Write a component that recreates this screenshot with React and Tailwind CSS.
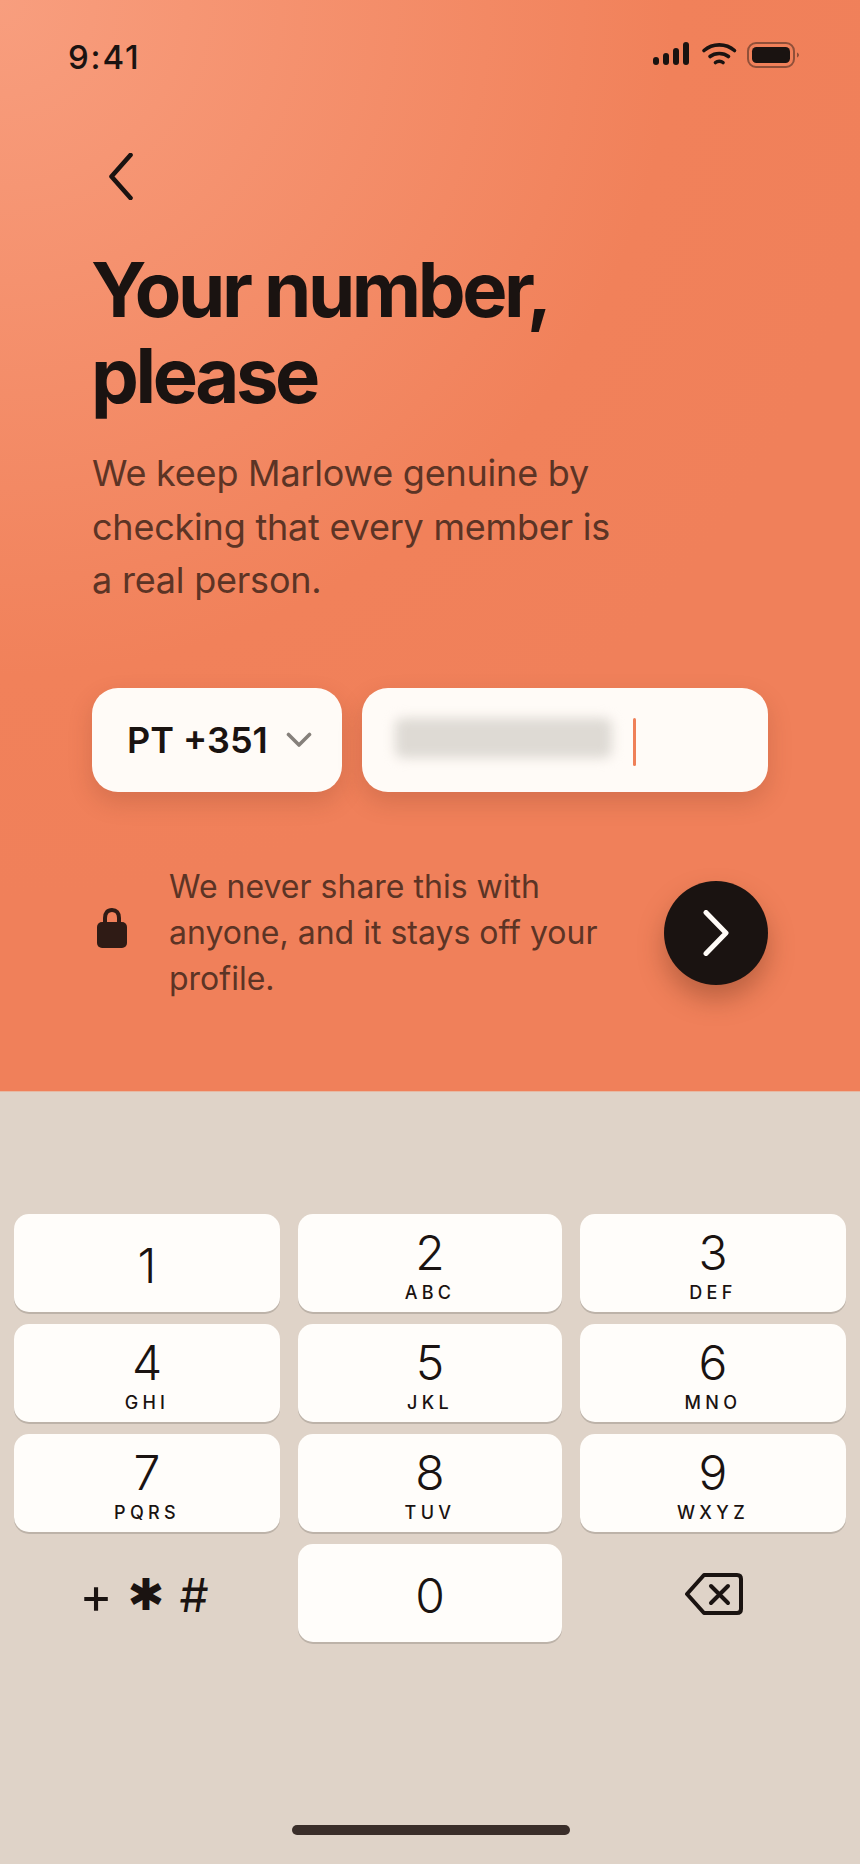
import React from 'react';

const keys = [
  ['1', ''], ['2', 'ABC'], ['3', 'DEF'],
  ['4', 'GHI'], ['5', 'JKL'], ['6', 'MNO'],
  ['7', 'PQRS'], ['8', 'TUV'], ['9', 'WXYZ'],
];

const Key = ({ digit, letters }) => (
  <button className="h-[98px] rounded-[15px] bg-[#fffdfa] shadow-[0_2px_0_#bdb3a9] flex flex-col items-center justify-center pt-[5px] text-[#1a1311]">
    <span className="text-[48px] leading-[50px] font-[350]">{digit}</span>
    {letters && <span className="text-[18px] leading-[22px] mt-[4px] font-medium tracking-[0.24em]">{letters}</span>}
  </button>
);

const StatusIcons = () => (
  <svg width="146" height="26" viewBox="0 0 146 26" fill="none">
    <rect x="0" y="15" width="6" height="8" rx="3" fill="#1a1311" />
    <rect x="10" y="11" width="6" height="12" rx="3" fill="#1a1311" />
    <rect x="20" y="6" width="6" height="17" rx="3" fill="#1a1311" />
    <rect x="30" y="0" width="6" height="23" rx="3" fill="#1a1311" />
    <path d="M51 8.5C59.5 1 73 1 81.5 8.5" stroke="#1a1311" strokeWidth="3.6" strokeLinecap="round" />
    <path d="M57 14.5C62 10.5 70.5 10.5 75.5 14.5" stroke="#1a1311" strokeWidth="3.6" strokeLinecap="round" />
    <path d="M62.5 20.5C64.5 18.8 68 18.8 70 20.5" stroke="#1a1311" strokeWidth="3.6" strokeLinecap="round" />
    <rect x="95" y="1" width="46" height="24" rx="8" stroke="#1a1311" strokeOpacity="0.45" strokeWidth="2" />
    <rect x="99" y="5" width="38" height="16" rx="4.5" fill="#1a1311" />
    <path d="M144 10.5C145.4 11.2 146 12 146 13C146 14 145.4 14.8 144 15.5Z" fill="#1a1311" fillOpacity="0.45" />
  </svg>
);

export default function App() {
  return (
    <div className="w-[860px] h-[1864px] flex flex-col overflow-hidden font-['Inter',sans-serif]">
      <section className="h-[1092px] shrink-0 bg-[radial-gradient(ellipse_900px_900px_at_0%_0%,#f89e7e_0%,#f1815a_75%,#f0805a_100%)] border-b border-[#e7b9a3]">
        <div className="flex items-start justify-between pl-[68px] pr-[61px] pt-[39px]">
          <span className="text-[33px] leading-[36px] font-medium tracking-[0.055em] text-[#1a1311]">9:41</span>
          <div className="pt-[3px]"><StatusIcons /></div>
        </div>

        <div className="pl-[109px] mt-[78px]">
          <svg width="24" height="47" viewBox="0 0 24 47" fill="none">
            <path d="M21.5 2L2.5 23.5L21.5 45" stroke="#1a1311" strokeWidth="4.6" strokeLinecap="round" strokeLinejoin="round" />
          </svg>
        </div>

        <div className="px-[92px]">
          <h1 className="mt-[46px] -ml-[1px] text-[76px] leading-[86px] font-bold tracking-[-0.045em] text-[#1a1311]">
            Your number,<br />please
          </h1>
          <p className="mt-[29px] text-[36px] leading-[53.5px] tracking-[-0.006em] text-[#5c3425]">
            We keep Marlowe genuine by<br />checking that every member is<br />a real person.
          </p>

          <div className="mt-[80px] flex gap-[20px]">
            <div className="w-[250px] h-[104px] rounded-[26px] bg-[#fffbf7] shadow-[0_10px_24px_rgba(90,40,20,0.18)] flex items-center pl-[35px] gap-[18px]">
              <span className="text-[36px] font-semibold text-[#1a1311]">PT +351</span>
              <svg width="26" height="16" viewBox="0 0 26 16" fill="none">
                <path d="M2.5 2.5L13 13L23.5 2.5" stroke="#86807b" strokeWidth="3.6" strokeLinecap="round" strokeLinejoin="round" />
              </svg>
            </div>
            <div className="flex-1 h-[104px] rounded-[26px] bg-[#fffbf7] shadow-[0_10px_24px_rgba(90,40,20,0.18)] flex items-center pl-[33px]">
              <div className="w-[217px] h-[40px] mb-[4px] rounded-[8px] bg-[#dedad4] blur-[6px]" />
              <div className="w-[3px] h-[48px] ml-[21px] mt-[4px] rounded-full bg-[#ef8058]" />
            </div>
          </div>

          <div className="mt-[72px] flex items-center">
            <svg className="w-[30px] h-[41px] ml-[5px] mb-[10px] shrink-0" viewBox="0 0 30 41" fill="none">
              <path d="M8 17V11C8 6 10.5 3 15 3C19.5 3 22 6 22 11V17" stroke="#2f1b15" strokeWidth="4" />
              <rect x="0" y="15" width="30" height="26" rx="5" fill="#2f1b15" />
            </svg>
            <p className="ml-[42px] w-[450px] text-[32px] leading-[46px] text-[#5c3425]">
              We never share this with anyone, and it stays off your profile.
            </p>
            <button className="ml-auto mt-[1px] w-[104px] h-[104px] rounded-full bg-[#1a1311] shadow-[0_14px_26px_rgba(90,40,20,0.35)] flex items-center justify-center">
              <svg width="26" height="46" viewBox="0 0 26 46" fill="none">
                <path d="M3 2.5L23 23L3 43.5" stroke="#fffbf7" strokeWidth="5" strokeLinecap="round" strokeLinejoin="round" />
              </svg>
            </button>
          </div>
        </div>
      </section>

      <section className="flex-1 bg-[#dfd3c8] px-[14px] pt-[122px]">
        <div className="grid grid-cols-[266px_264px_266px] gap-x-[18px] gap-y-[12px]">
          {keys.map(([digit, letters]) => (
            <Key key={digit} digit={digit} letters={letters} />
          ))}
          <div className="h-[98px] flex items-center justify-center gap-[15px] text-[#1a1311] pt-[4px] pr-[6px]">
            <span className="text-[50px] leading-none">+</span>
            <span className="text-[44px] leading-none font-['DejaVu_Sans',sans-serif]">✱</span>
            <span className="text-[46px] leading-none">#</span>
          </div>
          <Key digit="0" />
          <div className="h-[98px] flex items-center justify-center pl-[2px] pt-[2px]">
            <svg width="58" height="42" viewBox="0 0 58 42" fill="none">
              <path d="M19 2H52C54.5 2 56 3.5 56 6V36C56 38.5 54.5 40 52 40H19L2 21Z" stroke="#1a1311" strokeWidth="4" strokeLinejoin="round" />
              <path d="M26 13L43 30M43 13L26 30" stroke="#1a1311" strokeWidth="4" strokeLinecap="round" />
            </svg>
          </div>
        </div>
        <div className="mt-[183px] ml-[278px] w-[278px] h-[10px] rounded-full bg-[#3a2e2a]" />
      </section>
    </div>
  );
}
